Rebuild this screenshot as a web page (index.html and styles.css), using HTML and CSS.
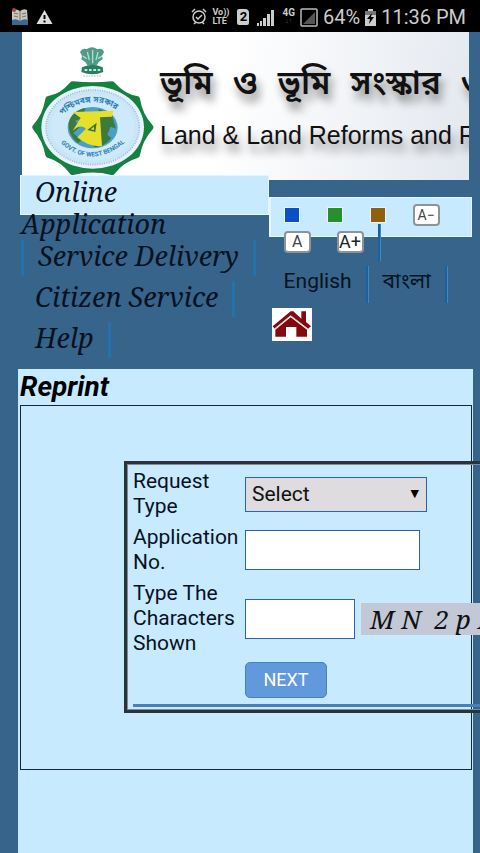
FILE: index.html
```
<!DOCTYPE html>
<html lang="en">
<head>
    <meta charset="utf-8">
    <meta name="viewport" content="width=device-width, initial-scale=1">
    <title>Land &amp; Land Reforms - Reprint</title>
    <link rel="stylesheet" href="styles.css">
</head>
<body>
    <div class="statusbar">
        <div class="status-left">
            <svg width="18" height="18" viewBox="0 0 18 18">
                <path d="M1 3Q5 0 9 3Q13 0 16 2L17 16H1z" fill="#c9c6bd"/>
                <path d="M1 12Q5 10 9 13Q13 10 17 12V17H1z" fill="#3b6790"/>
                <path d="M9 3V13M3 5l4 1M3 8l4 1M11 6l4-1M11 9l4-1" stroke="#77736b" fill="none"/>
                <circle cx="3" cy="2" r="2" fill="#a8444b"/>
            </svg>
            <svg width="17" height="16" viewBox="0 0 17 16">
                <path d="M8.500 1L16.500 15H.5z" fill="#ddd"/>
                <path d="M8.500 6v4M8.500 11.500v2" stroke="#000" stroke-width="2"/>
            </svg>
        </div>
        <div class="status-right">
            <svg width="16" height="18" viewBox="0 0 16 18" fill="none" stroke="#ccc" stroke-width="1.500">
                <circle cx="8" cy="9" r="6"/>
                <path d="M1 4l3-3M15 4l-3-3M3 16l2-2M13 16l-2-2M5 9l2 2 4-4"/>
            </svg>
            <span class="volte">Vo))<br>LTE</span>
            <span class="sim">2</span>
            <svg class="signal" width="17" height="17" viewBox="0 0 17 17" fill="#ccc">
                <path d="M0 14h2v3H0zM3 12h2v5H3zM6 9h3v8H6zM10 5h3v12h-3zM14 1h3v16h-3z"/>
            </svg>
            <span class="lte">4G<i>↓↑</i></span>
            <svg width="18" height="19" viewBox="0 0 18 19">
                <rect x="1" y="1" width="16" height="17" rx="1" fill="none" stroke="#bbb" stroke-width="1.500"/>
                <path d="M15 4v12H3z" fill="#555"/>
            </svg>
            <span class="status-text">64%</span>
            <svg class="battery" width="11" height="17" viewBox="0 0 11 17">
                <path d="M3 0h5v2h3v15H0V2h3z" fill="#ccc"/>
                <path d="M0 2h11v4H0z" fill="#777"/>
                <path d="M7 4L2 10h3l-1 5 5-7H6z" fill="#000"/>
            </svg>
            <span class="status-text">11:36 PM</span>
        </div>
    </div>

    <header class="banner">
        <svg class="emblem" width="127" height="132" viewBox="90 39 381 396">
            <!-- lion capital -->
            <g fill="#4f9c86">
                <path d="M240 66q8-14 20-8q16-12 32 0q14-6 20 8l-6 12 2 10-12 8-6 10h-28l-6-10-12-8 2-10z"/>
                <path d="M246 112q32-16 62 0l2 14q-32 14-66 0z" fill="#287d62"/>
            </g>
            <path d="M262 66l6 24M278 60v40M294 66l-6 24M248 78l12 8M306 78l-12 8" stroke="#b8dace" stroke-width="4" fill="none"/>
            <path d="M254 120h48" stroke="#c6e4da" stroke-width="6" stroke-dasharray="8 5"/>
            <path d="M250 138h56" stroke="#8a9690" stroke-width="2" stroke-dasharray="5 3"/>
            <!-- scalloped seal -->
            <path d="M218 164Q278 170 336 164Q370 202 410 208Q418 258 450 292Q418 328 410 374Q366 386 336 425Q278 410 218 425Q188 386 146 374Q138 328 107 292Q138 258 146 208Q186 202 218 164z" fill="#15803f" stroke="#15803f" stroke-width="20" stroke-linejoin="round"/>
            <ellipse cx="278" cy="292" rx="154" ry="124" fill="#e4f3fd"/>
            <ellipse cx="278" cy="292" rx="140" ry="112" fill="#c9e5f8" stroke="#a9b7cd" stroke-width="5" stroke-dasharray="3 4"/>
            <ellipse cx="278" cy="292" rx="126" ry="100" fill="#cde9fa"/>
            <ellipse cx="278" cy="293" rx="75" ry="62" fill="#4a9fc9"/>
            <path d="M206 280q8-38 50-46l-8 30-22 8 12 20-18 18 24 20-10 10q-30-24-28-60zM296 236l40 20 12 40-16-6-10 24 12 10q-20 26-50 28l-10-14 28-6-4-38z" fill="#3d7a3c"/>
            <path d="M218 246l122-4-4 18-36 2 6 86q-40 4-74-26l26-26q-16-16-40 6l24-38z" fill="#e6e02c"/>
            <path d="M262 300l28-22-4 28z" fill="#39763a"/>
            <path d="M272 298l10-8v10z" fill="#e6e02c"/>
            <path id="arc-top" d="M186 256Q278 176 372 256" fill="none"/>
            <path id="arc-bottom" d="M182 340Q278 424 384 330" fill="none"/>
            <text class="seal-text seal-bn"><textPath href="#arc-top">পশ্চিমবঙ্গ সরকার</textPath></text>
            <text class="seal-text"><textPath href="#arc-bottom">GOVT. OF WEST BENGAL</textPath></text>
        </svg>
        <div class="banner-title">
            <div class="title-bn" lang="bn">
                <span>ভূমি</span>
                <span>ও</span>
                <span>ভূমি</span>
                <span>সংস্কার</span>
                <span>ও</span>
            </div>
            <div class="title-en">Land &amp; Land Reforms and R</div>
        </div>
    </header>

    <div class="topnav">
        <nav class="menu">
            <ul>
                <li class="wrap"><a href="#">Online Application</a></li>
                <li class="sep-left sep"><a href="#">Service Delivery</a></li>
                <li class="sep"><a href="#">Citizen Service</a></li>
                <li class="sep"><a href="#">Help</a></li>
            </ul>
        </nav>
        <div class="tools">
            <div class="tools-bar">
                <div class="themes">
                    <button class="swatch blue" aria-label="Blue theme"></button>
                    <button class="swatch green" aria-label="Green theme"></button>
                    <button class="swatch brown" aria-label="Brown theme"></button>
                    <button class="size size-small">A−</button>
                </div>
                <div class="sizes">
                    <button class="size">A</button>
                    <button class="size size-large">A+</button>
                    <span class="divider"></span>
                </div>
                <div class="languages">
                    <a href="#">English</a>
                    <span class="divider"></span>
                    <a href="#" lang="bn">বাংলা</a>
                    <span class="divider"></span>
                </div>
                <a class="home" href="#" aria-label="Home">
                    <svg width="40" height="33" viewBox="0 0 120 99">
                        <g fill="#820a0e">
                            <path d="M56 10L2 55l6 7L56 23l52 39 9-7-15-13V10H88v22L64 10z"/>
                            <path d="M56 28L10 65v21h32V57h31v29h32V65z"/>
                        </g>
                        <path d="M7 63L56 23l52 40" fill="none" stroke="#e9c4c5" stroke-width="3"/>
                    </svg>
                </a>
            </div>
        </div>
    </div>

    <main>
        <h1>Reprint</h1>
        <div class="panel">
            <form class="request">
                <label for="type">Request Type</label>
                <div class="select">
                    <select id="type"><option>Select</option></select>
                </div>

                <label for="appno">Application No.</label>
                <input type="text" id="appno">

                <label for="captcha">Type The Characters Shown</label>
                <div class="captcha-row">
                    <input type="text" id="captcha">
                    <span class="captcha">M N&nbsp; 2 p K</span>
                </div>

                <button class="next" type="button">NEXT</button>
                <hr>
            </form>
        </div>
    </main>
</body>
</html>
```
FILE: styles.css
```
* {
    box-sizing: border-box;
}
body {
    margin: 0;
    min-height: 100vh;
    display: flex;
    flex-direction: column;
    overflow-x: hidden;
    background: #37648b;
    color: #07121f;
    font-family: Roboto, "Noto Sans Bengali", sans-serif;
    font-size: 21px;
}
a {
    color: inherit;
    text-decoration: none;
}
button {
    padding: 0;
    font-family: inherit;
    cursor: pointer;
}
svg {
    display: block;
}

/* phone status bar */
.statusbar {
    display: flex;
    justify-content: space-between;
    align-items: center;
    height: 32px;
    padding: 2px 14px 0 11px;
    background: #000;
    color: #ccc;
}
.status-left,
.status-right {
    display: flex;
    align-items: center;
    gap: 7px;
}
.status-right {
    gap: 5px;
}
.volte {
    font-size: 9px;
    line-height: 9px;
    font-weight: bold;
}
.sim {
    width: 12px;
    margin-left: 3px;
    border-radius: 2px 4px 2px 2px;
    background: #ccc;
    color: #000;
    font-size: 13px;
    line-height: 16px;
    font-weight: bold;
    text-align: center;
}
.signal {
    margin: 0 3px;
}
.lte {
    font-size: 10px;
    line-height: 9px;
    font-weight: bold;
}
.lte i {
    display: block;
    color: #555;
    font-size: 7px;
    font-style: normal;
    text-align: center;
}
.status-text {
    font-size: 20px;
}

/* banner */
.banner {
    display: flex;
    height: 148px;
    margin: 0 11px 0 22px;
    padding: 11px 0 0 8px;
    overflow: hidden;
    background: linear-gradient(100deg, #fff 45%, #e3e8ef 100%);
}
.emblem {
    flex: none;
}
.seal-text {
    fill: #2f7fb4;
    font-size: 19px;
    font-weight: bold;
}
.seal-bn {
    font-size: 25px;
}
.banner-title {
    padding: 14px 0 0 3px;
    color: #111;
    white-space: nowrap;
    text-shadow: 3px 8px 8px #888;
}
.title-bn {
    display: flex;
    gap: 20px;
    font-size: 33px;
    line-height: 52px;
    font-weight: 600;
}
.title-en {
    font-family: "Liberation Sans Narrow", "Liberation Sans", sans-serif;
    font-size: 25px;
    line-height: 52px;
}

/* navigation */
.topnav {
    display: grid;
    grid-template-columns: 55% 45%;
    min-height: 194px;
    margin: -5px 8px 0 20px;
    position: relative;
}
.menu {
    height: 40px;
    border: 1px solid #e4f5ff;
    background: #c8eaff;
    font-family: "Noto Serif", "Liberation Serif", serif;
    font-size: 27px;
    font-style: italic;
}
.menu ul {
    margin: 0;
    padding: 0;
    list-style: none;
}
.menu li {
    width: max-content;
    margin-bottom: 5px;
    padding: 0 14px 4px;
    line-height: 32px;
}
.menu .wrap {
    width: 180px;
    margin: 0;
    padding: 0;
    text-indent: 14px;
}
.menu .sep {
    border-right: 3px solid #2272ae;
}
.menu .sep-left {
    border-left: 3px solid #2272ae;
}
.tools {
    padding-top: 22px;
}
.tools-bar {
    height: 40px;
    border: 1px solid #e4f5ff;
    border-left-width: 2px;
    background: #c8eaff;
}
.themes,
.sizes,
.languages {
    display: flex;
    align-items: center;
    padding-left: 13px;
}
.themes {
    height: 34px;
    gap: 27px;
}
.sizes {
    height: 20px;
    gap: 26px;
}
.sizes .divider {
    margin-left: -12px;
}
.languages {
    height: 37px;
    margin-top: 14px;
    gap: 14px;
    line-height: 28px;
}
.languages a {
    padding-bottom: 8px;
}
.swatch {
    width: 16px;
    height: 16px;
    border: 1px solid #e4f5ff;
}
.blue {
    background: #0b4fc4;
}
.green {
    background: #26912c;
}
.brown {
    background: #8f610e;
}
.size {
    width: 27px;
    height: 22px;
    border: 2px solid #8d9499;
    border-radius: 4px;
    background: #fff;
    color: #444;
    font-size: 16px;
    line-height: 18px;
}
.size-small {
    font-size: 14px;
}
.size-large {
    color: #222;
    font-size: 18px;
}
.divider {
    width: 3px;
    height: 37px;
    background: #17629f;
    border-right: 1px solid #3b88c4;
}
.home {
    display: inline-block;
    margin: 5px 0 0 1px;
    background: #fff;
}

/* content */
main {
    flex: 1;
    margin: 0 7px 0 18px;
    padding: 0 1px 0 2px;
    background: #c8eaff;
}
h1 {
    margin: 0;
    color: #000;
    font-size: 28px;
    line-height: 36px;
    font-style: italic;
}
.panel {
    padding: 55px 0 56px 103px;
    border: 1px solid #12293c;
}
.request {
    display: grid;
    grid-template-columns: 106px auto;
    align-items: center;
    justify-content: start;
    gap: 6px;
    width: 420px;
    padding: 5px 5px 3px 6px;
    border: 3px solid #2b3338;
    box-shadow: inset 0 0 0 1px #7d8c96;
    line-height: 25px;
}
.request input,
.request select {
    border: 1px solid #2a62b8;
    background: #fff;
    font-family: inherit;
    font-size: 21px;
}
.request input {
    width: 175px;
    height: 40px;
}
.select {
    position: relative;
    width: 182px;
}
.select::after {
    content: "▼";
    position: absolute;
    right: 8px;
    top: 4px;
    color: #000;
    font-family: "DejaVu Sans", sans-serif;
    font-size: 11px;
    pointer-events: none;
}
.request select {
    display: block;
    width: 100%;
    height: 35px;
    padding: 0 6px;
    appearance: none;
    border-radius: 0;
    background: #dedcde;
    color: #111;
}
.captcha-row {
    display: flex;
    align-items: center;
    gap: 6px;
}
.request .captcha-row input {
    width: 110px;
}
.captcha {
    width: 170px;
    padding-left: 9px;
    background: #c2c8d6;
    color: #111;
    font-family: "Noto Serif", "Liberation Serif", serif;
    font-size: 26px;
    font-style: italic;
    line-height: 32px;
    white-space: nowrap;
}
.next {
    grid-column: 2;
    width: 82px;
    height: 36px;
    border: 1px solid #4a7fc0;
    border-radius: 5px;
    background: #6299dc;
    color: #fff;
    font-size: 18px;
    line-height: 32px;
}
hr {
    grid-column: 1 / -1;
    width: 100%;
    height: 3px;
    margin: 0;
    border: 0;
    background: #4682b4;
}
```
